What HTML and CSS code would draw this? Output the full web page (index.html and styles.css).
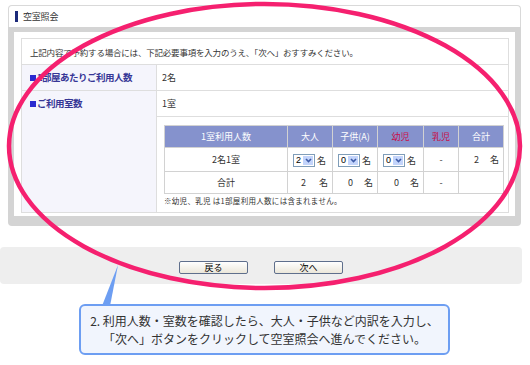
FILE: index.html
```html
<!DOCTYPE html>
<html lang="ja">
<head>
<meta charset="utf-8">
<title>空室照会</title>
<link rel="stylesheet" href="styles.css">
</head>
<body>
<div class="page">
  <section class="panel">
    <header class="panel-head"><span class="bar"></span><span class="title">空室照会</span></header>
    <div class="panel-frame">
      <div class="panel-inner">
        <table class="form">
          <tr>
            <td colspan="2" class="intro">上記内容で予約する場合には、下記必要事項を入力のうえ、「次へ」おすすみください。</td>
          </tr>
          <tr>
            <th class="label"><span class="sq"></span>1部屋あたりご利用人数</th>
            <td class="val">2名</td>
          </tr>
          <tr>
            <th class="label" rowspan="2"><span class="sq"></span>ご利用室数</th>
            <td class="val">1室</td>
          </tr>
          <tr>
            <td class="detail">
              <table class="people">
                <colgroup>
                  <col class="w1"><col class="w2"><col class="w2"><col class="w3"><col class="w4"><col class="w2">
                </colgroup>
                <tr class="hd">
                  <th>1室利用人数</th><th>大人</th><th>子供(A)</th><th class="red">幼児</th><th class="red">乳児</th><th>合計</th>
                </tr>
                <tr class="r2">
                  <td class="c">2名1室</td>
                  <td class="s"><span class="sel"><span class="v">2</span><span class="arr"><svg width="7" height="5" viewBox="0 0 7 5"><path d="M1 1 L3.5 3.5 L6 1" fill="none" stroke="#3d5ba8" stroke-width="1.6"/></svg></span></span><span class="u1">名</span></td>
                  <td class="s"><span class="sel"><span class="v">0</span><span class="arr"><svg width="7" height="5" viewBox="0 0 7 5"><path d="M1 1 L3.5 3.5 L6 1" fill="none" stroke="#3d5ba8" stroke-width="1.6"/></svg></span></span><span class="u1">名</span></td>
                  <td class="s"><span class="sel"><span class="v">0</span><span class="arr"><svg width="7" height="5" viewBox="0 0 7 5"><path d="M1 1 L3.5 3.5 L6 1" fill="none" stroke="#3d5ba8" stroke-width="1.6"/></svg></span></span><span class="u1">名</span></td>
                  <td class="c">-</td>
                  <td class="r">2<span class="u">名</span></td>
                </tr>
                <tr class="r3">
                  <td class="c">合計</td>
                  <td class="r">2<span class="u wide">名</span></td>
                  <td class="r">0<span class="u">名</span></td>
                  <td class="r">0<span class="u">名</span></td>
                  <td class="c">-</td>
                  <td class="r"></td>
                </tr>
              </table>
              <p class="note">※幼児、乳児 は1部屋利用人数には含まれません。</p>
            </td>
          </tr>
        </table>
      </div>
    </div>
  </section>

  <div class="actions">
    <button class="btn" type="button">戻る</button>
    <button class="btn" type="button">次へ</button>
  </div>

  <div class="callout">
    <svg class="tail" width="20" height="42" viewBox="0 0 20 42"><polygon points="1,42 9,42 17,1" fill="#6d9ef2"/></svg>
    <p class="callout-line">2. 利用人数・室数を確認したら、大人・子供など内訳を入力し、</p>
    <p class="callout-line">「次へ」ボタンをクリックして空室照会へ進んでください。</p>
  </div>

  <svg class="ring" width="530" height="365" viewBox="0 0 530 365"><ellipse cx="264.5" cy="146" rx="255.5" ry="142" fill="none" stroke="#f5206f" stroke-width="4.5"/></svg>
</div>
</body>
</html>
```

FILE: styles.css
```css
* { box-sizing: border-box; }
body {
  margin: 0;
  background: #fff;
  font-family: "Noto Sans CJK JP", sans-serif;
  color: #333;
}
.page {
  position: relative;
  width: 530px;
  height: 365px;
  overflow: hidden;
  padding-top: 5px;
}
.panel {
  margin-left: 8px;
  width: 513px;
}
.panel-head {
  height: 22px;
  border: 1px solid #d9d9d9;
  border-bottom: none;
  border-radius: 4px 4px 0 0;
  background: #fff;
  display: flex;
  align-items: center;
  padding-left: 6px;
}
.bar {
  width: 3px;
  height: 11px;
  background: #1c2a7a;
  margin-right: 5px;
}
.title {
  font-size: 9px;
  letter-spacing: -0.2px;
  color: #333;
}
.panel-frame {
  background: #d4d4d4;
  padding: 5px 6px 10px 6px;
  border-radius: 0 0 4px 4px;
}
.panel-inner {
  background: #fff;
  padding: 6px 6px 3px 7px;
}
.form {
  width: 488px;
  border-collapse: collapse;
  font-size: 9px;
}
.form > tbody > tr > td,
.form > tbody > tr > th {
  border: 1px solid #dedede;
}
.intro {
  height: 26px;
  padding: 0 8px;
  font-size: 8.5px;
  letter-spacing: -0.2px;
}
.label {
  width: 135px;
  background: #f5f5fc;
  text-align: left;
  vertical-align: top;
  padding: 5px 0 0 8px;
  color: #363696;
  font-size: 9.5px;
  font-weight: bold;
  line-height: 15px;
  letter-spacing: -0.5px;
  white-space: nowrap;
}
.sq {
  display: inline-block;
  width: 6px;
  height: 6px;
  background: #2a2ad0;
  margin-right: 1px;
  vertical-align: 0;
}
.val {
  height: 26px;
  padding: 0 0 0 5px;
  font-size: 9px;
}
.detail {
  padding: 8px 0 6px 7px;
  vertical-align: top;
}
.people {
  width: 339px;
  border-collapse: collapse;
  font-size: 9px;
  table-layout: fixed;
}
.w1 { width: 123px; }
.w2 { width: 45px; }
.w3 { width: 46px; }
.w4 { width: 35px; }
.people th,
.people td {
  border: 1px solid #d2d2d2;
  padding: 0;
  white-space: nowrap;
}
.people th {
  background: #8592cd;
  color: #fff;
  font-weight: normal;
  height: 22px;
}
.people th.red { color: #c8104a; }
.people .r2 td { height: 24px; }
.people .r3 td { height: 22px; }
.people .c { text-align: center; }
.people .s { padding-left: 5px; }
.people .r { text-align: right; padding-right: 4px; }
.u { margin-left: 11px; }
.u.wide { margin-left: 13px; }
.u1 { margin-left: 2px; vertical-align: middle; }
.sel {
  display: inline-flex;
  align-items: center;
  width: 22px;
  height: 13px;
  border: 1px solid #7f9db9;
  background: #fff;
  vertical-align: middle;
  padding: 1px;
}
.sel .v {
  flex: 1;
  font-family: "Liberation Sans", sans-serif;
  font-size: 9px;
  line-height: 1;
  padding-left: 1px;
  color: #000;
}
.sel .arr {
  width: 10px;
  height: 9px;
  background: #c3d4fb;
  display: flex;
  align-items: center;
  justify-content: center;
}
.note {
  margin: 2px 0 0;
  font-size: 7.5px;
  letter-spacing: 0.3px;
  line-height: 10px;
}
.actions {
  margin-top: 21px;
  width: 522px;
  height: 37px;
  background: #eeeeee;
  border-radius: 4px;
  display: flex;
  justify-content: center;
  gap: 26px;
  padding-top: 14px;
}
.btn {
  width: 69px;
  height: 13px;
  border: 1px solid #5f6f8c;
  border-radius: 2px;
  background: linear-gradient(#ffffff, #ebe7da);
  font-family: "Noto Sans CJK JP", sans-serif;
  font-size: 9px;
  line-height: 11px;
  padding: 0;
  color: #000;
}
.callout {
  position: relative;
  margin: 20px 0 0 79px;
  width: 371px;
  height: 51px;
  border: 2px solid #6d9ef2;
  border-radius: 6px;
  background: #f1f5fd;
  display: flex;
  flex-direction: column;
  justify-content: center;
  text-align: center;
  font-size: 12px;
  line-height: 18px;
  color: #333;
}
.callout-line { margin: 0; white-space: nowrap; }
.tail {
  position: absolute;
  left: 20px;
  top: -42px;
}
.ring {
  position: absolute;
  left: 0;
  top: 0;
  pointer-events: none;
}
```
